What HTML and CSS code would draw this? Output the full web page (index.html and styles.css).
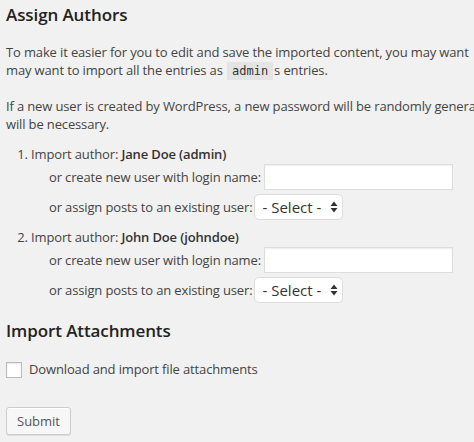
FILE: index.html
```html
<!DOCTYPE html>
<html>
<head>
<meta charset="utf-8">
<link rel="stylesheet" href="styles.css">
</head>
<body>
<form class="import-form">
  <h3 class="title">Assign Authors</h3>
  <p class="text"><span class="line">To make it easier for you to edit and save the imported content, you may want</span><span class="line">may want to import all the entries as <code class="code">admin</code>s entries.</span></p>
  <p class="text"><span class="line">If a new user is created by WordPress, a new password will be randomly generat</span><span class="line">will be necessary.</span></p>

  <ol class="authors">
    <li class="author">
      <div class="author-head">Import author: <strong class="name">Jane Doe (admin)</strong></div>
      <div class="author-row">
        <label class="row-label">or create new user with login name:</label>
        <input class="text-input" type="text">
      </div>
      <div class="author-row author-row-select">
        <label class="row-label">or assign posts to an existing user:</label>
        <span class="select-wrap">
          <select class="select"><option>- Select -</option></select>
          <svg class="select-arrows" width="8" height="12" viewBox="0 0 8 12"><path d="M4 0.5 L7.5 5 L0.5 5 Z M4 11.5 L7.5 7 L0.5 7 Z" fill="#333"/></svg>
        </span>
      </div>
    </li>
    <li class="author">
      <div class="author-head">Import author: <strong class="name">John Doe (johndoe)</strong></div>
      <div class="author-row">
        <label class="row-label">or create new user with login name:</label>
        <input class="text-input" type="text">
      </div>
      <div class="author-row author-row-select">
        <label class="row-label">or assign posts to an existing user:</label>
        <span class="select-wrap">
          <select class="select"><option>- Select -</option></select>
          <svg class="select-arrows" width="8" height="12" viewBox="0 0 8 12"><path d="M4 0.5 L7.5 5 L0.5 5 Z M4 11.5 L7.5 7 L0.5 7 Z" fill="#333"/></svg>
        </span>
      </div>
    </li>
  </ol>

  <h3 class="title title-attach">Import Attachments</h3>
  <div class="check-row">
    <input class="checkbox" type="checkbox" id="fetch">
    <label class="check-label" for="fetch">Download and import file attachments</label>
  </div>

  <div class="submit-row">
    <button class="button" type="button">Submit</button>
  </div>
</form>
</body>
</html>
```

FILE: styles.css
```css
html, body {
  margin: 0;
  padding: 0;
  background: #f1f1f1;
}

body {
  font-family: "Open Sans", "Noto Sans", sans-serif;
  font-size: 13px;
  letter-spacing: -0.14px;
  color: #444;
  width: 474px;
  height: 442px;
  overflow: hidden;
}

.import-form {
  padding: 0 6px;
}

.title {
  font-size: 17px;
  line-height: 22px;
  font-weight: 600;
  color: #222;
  margin: 4px 0 0;
  letter-spacing: -0.1px;
}

.text {
  margin: 17px 0 0;
  line-height: 18px;
}

.line {
  display: block;
  white-space: nowrap;
}

.code {
  font-family: "DejaVu Sans Mono", monospace;
  font-size: 12px;
  letter-spacing: 0;
  background: #e4e4e4;
  padding: 2px 5px 2px;
  margin: 0 1px;
  color: #333;
}

.authors {
  margin: 12px 0 0;
  padding: 0 0 0 25px;
}

.author {
  margin-bottom: 8px;
}

.author:last-child {
  margin-bottom: 0;
}

.author-head {
  line-height: 19px;
}

.name {
  font-weight: 600;
  color: #333;
}

.author-row {
  display: flex;
  align-items: center;
  margin-left: 18px;
  height: 26px;
  gap: 3px;
}

.author-row-select {
  margin-top: 4px;
  gap: 2px;
}

.row-label {
  white-space: nowrap;
}

.text-input {
  box-sizing: border-box;
  width: 189px;
  height: 26px;
  margin: 0;
  padding: 3px 5px;
  border: 1px solid #ddd;
  background: #fff;
  box-shadow: inset 0 1px 2px rgba(0, 0, 0, 0.07);
  font-family: inherit;
  font-size: 14px;
  outline: none;
}

.select-wrap {
  position: relative;
  display: inline-block;
  height: 26px;
}

.select {
  -webkit-appearance: none;
  appearance: none;
  box-sizing: border-box;
  width: 89px;
  height: 26px;
  margin: 0;
  padding: 0 0 0 7px;
  border: 1px solid #ddd;
  border-radius: 5px;
  background: #fff;
  font-family: "Open Sans", sans-serif;
  font-size: 15px;
  color: #333;
  line-height: 24px;
}

.select-arrows {
  position: absolute;
  right: 5px;
  top: 7px;
  pointer-events: none;
}

.title-attach {
  margin-top: 17px;
}

.check-row {
  display: flex;
  align-items: center;
  margin-top: 18px;
  height: 19px;
}

.checkbox {
  -webkit-appearance: none;
  appearance: none;
  box-sizing: border-box;
  width: 16px;
  height: 16px;
  margin: 0 7px 0 0;
  border: 1px solid #bbb;
  background: #fff;
  box-shadow: inset 0 1px 2px rgba(0, 0, 0, 0.1);
}

.check-label {
  line-height: 19px;
}

.submit-row {
  margin-top: 28px;
}

.button {
  box-sizing: border-box;
  height: 28px;
  padding: 0 10px;
  margin: 0;
  border: 1px solid #ccc;
  border-radius: 3px;
  background: #f7f7f7;
  box-shadow: inset 0 1px 0 #fff, 0 1px 0 rgba(0, 0, 0, 0.08);
  font-family: "Open Sans", sans-serif;
  font-size: 13px;
  letter-spacing: 0;
  color: #555;
  line-height: 26px;
}
```
